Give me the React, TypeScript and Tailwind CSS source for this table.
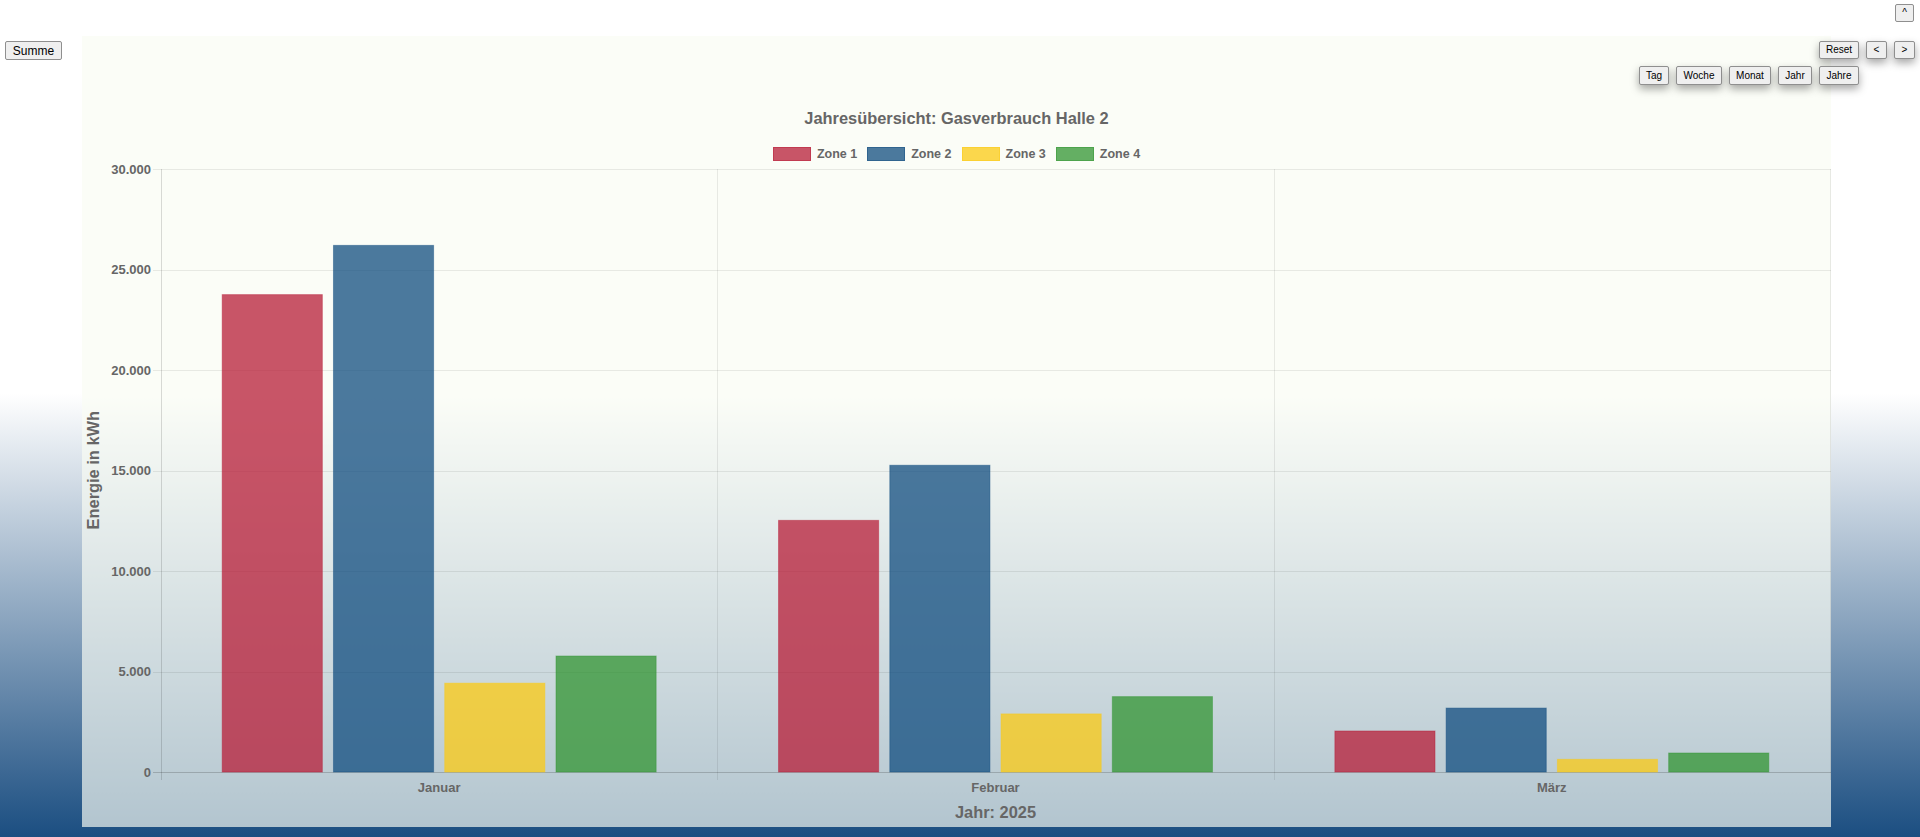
import React from 'react';

const zones = [
  { name: 'Zone 1', fill: 'rgba(183,28,55,0.75)', stroke: 'rgba(183,28,55,0.45)' },
  { name: 'Zone 2', fill: 'rgba(16,76,127,0.75)', stroke: 'rgba(16,76,127,0.45)' },
  { name: 'Zone 3', fill: 'rgba(251,201,19,0.75)', stroke: 'rgba(251,201,19,0.45)' },
  { name: 'Zone 4', fill: 'rgba(49,148,49,0.75)', stroke: 'rgba(49,148,49,0.45)' },
];

const months = [
  { label: 'Januar', values: [23750, 26200, 4420, 5770] },
  { label: 'Februar', values: [12520, 15260, 2890, 3750] },
  { label: 'März', values: [2040, 3180, 630, 945] },
];

const ticks = ['30.000', '25.000', '20.000', '15.000', '10.000', '5.000', '0'];

const ranges = [
  { label: 'Tag', w: 'w-[30px]' },
  { label: 'Woche', w: 'w-[46px]' },
  { label: 'Monat', w: 'w-[42px]' },
  { label: 'Jahr', w: 'w-[34px]' },
  { label: 'Jahre', w: 'w-[40px]' },
];

// plot geometry (px)
const PLOT_W = 1669;
const PLOT_H = 603;
const OFF = 8; // tick mark length left of the axis
const MAX = 30000;

const Btn = ({ children, className = '' }: { children: React.ReactNode; className?: string }) => (
  <button
    className={`flex items-center justify-center border border-[#8f8f8f] rounded-[2px] bg-[#efefef] text-black leading-none ${className}`}
  >
    {children}
  </button>
);

const Plot = () => {
  const cat = PLOT_W / 3;
  const slot = (cat * 0.8) / 4;
  const barW = slot * 0.9;
  return (
    <svg width={PLOT_W + OFF + 1} height={PLOT_H + OFF} className="block shrink-0">
      {ticks.map((_, k) => {
        const y = Math.round(k * (PLOT_H / 6)) + 0.5;
        const last = k === 6;
        return (
          <line
            key={k}
            x1={0}
            x2={PLOT_W + OFF + 1}
            y1={y}
            y2={y}
            stroke={last ? 'rgba(0,0,0,0.18)' : 'rgba(0,0,0,0.08)'}
            strokeWidth={1}
          />
        );
      })}
      {[0, 1, 2, 3].map((i) => {
        const x = Math.round(OFF + i * cat) + 0.5;
        return (
          <line
            key={i}
            x1={x}
            x2={x}
            y1={0}
            y2={PLOT_H + OFF}
            stroke={i === 0 ? 'rgba(0,0,0,0.14)' : 'rgba(0,0,0,0.08)'}
            strokeWidth={1}
          />
        );
      })}
      {months.map((m, i) =>
        m.values.map((v, j) => {
          const h = (v / MAX) * PLOT_H;
          const x = OFF + i * cat + cat * 0.1 + j * slot + (slot - barW) / 2;
          return (
            <rect
              key={`${i}-${j}`}
              x={x}
              y={PLOT_H - h}
              width={barW}
              height={h}
              fill={zones[j].fill}
              stroke={zones[j].stroke}
              strokeWidth={1}
            />
          );
        })
      )}
    </svg>
  );
};

export default function App() {
  return (
    <div className="relative h-[837px] w-full overflow-hidden bg-[linear-gradient(to_bottom,#ffffff_47%,#1b4e81_100%)] font-['Liberation_Sans',Arial,sans-serif]">
      <Btn className="absolute top-[4px] right-[6px] w-[19px] h-[18px] text-[10px]">^</Btn>

      <div className="absolute top-[41px] right-[5px] flex flex-col items-end gap-[7px] z-10">
        <div className="flex gap-[7px]">
          <Btn className="h-[18px] w-[40px] text-[10px] shadow-[0_4px_9px_rgba(0,0,0,0.35)]">Reset</Btn>
          <Btn className="h-[18px] w-[21px] text-[10px] shadow-[0_4px_9px_rgba(0,0,0,0.35)]">&lt;</Btn>
          <Btn className="h-[18px] w-[21px] text-[10px] shadow-[0_4px_9px_rgba(0,0,0,0.35)]">&gt;</Btn>
        </div>
        <div className="flex gap-[7px] mr-[56px]">
          {ranges.map((r) => (
            <Btn key={r.label} className={`h-[19px] ${r.w} text-[10px] shadow-[0_4px_9px_rgba(0,0,0,0.35)]`}>
              {r.label}
            </Btn>
          ))}
        </div>
      </div>

      <div className="flex items-start pt-[36px]">
        <Btn className="mt-[5px] ml-[5px] h-[19px] w-[57px] text-[12px]">Summe</Btn>

        <div className="ml-[20px] w-[1749px] h-[791px] flex flex-col bg-[rgba(249,252,243,0.68)] text-[#666]">
          <div className="mt-[72px] h-[20px] leading-[20px] text-center text-[16.4px] font-bold">
            Jahresübersicht: Gasverbrauch Halle 2
          </div>

          <div className="mt-[19px] h-[14px] flex justify-center items-center gap-[10px]">
            {zones.map((z) => (
              <div key={z.name} className="flex items-center gap-[6px]">
                <span
                  className="w-[38px] h-[14px] border"
                  style={{ background: z.fill, borderColor: z.stroke }}
                />
                <span className="text-[12.5px] font-bold leading-none">{z.name}</span>
              </div>
            ))}
          </div>

          <div className="mt-[8px] flex items-start">
            <div className="w-[22px] h-[603px] flex items-center justify-center">
              <span className="[writing-mode:vertical-rl] rotate-180 text-[16.4px] font-bold whitespace-nowrap leading-none">
                Energie in kWh
              </span>
            </div>
            <div className="w-[49px] h-[603px] flex flex-col justify-between pr-[2px]">
              {ticks.map((t) => (
                <div key={t} className="h-0 flex items-center justify-end">
                  <span className="text-[13px] font-bold leading-none whitespace-nowrap">{t}</span>
                </div>
              ))}
            </div>
            <Plot />
          </div>

          <div className="ml-[79px] w-[1669px] h-[16px] flex">
            {months.map((m) => (
              <div key={m.label} className="flex-1 text-center text-[13px] font-bold leading-[16px]">
                {m.label}
              </div>
            ))}
          </div>

          <div className="ml-[79px] w-[1669px] mt-[6px] h-[20px] leading-[20px] text-center text-[16.4px] font-bold">
            Jahr: 2025
          </div>
        </div>
      </div>
    </div>
  );
}
